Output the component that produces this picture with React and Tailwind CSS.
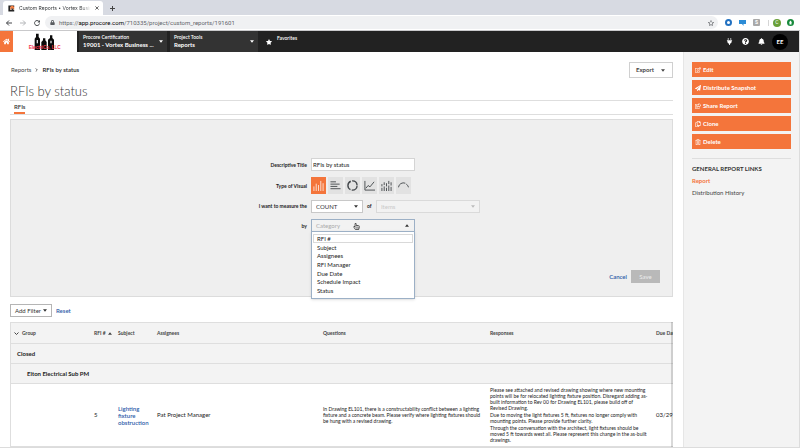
import React from "react";
import {
  FaHome,
  FaStar,
  FaPlug,
  FaQuestionCircle,
  FaBell,
  FaRegEdit,
  FaPaperPlane,
  FaRegShareSquare,
  FaRegCopy,
  FaRegTrashAlt,
  FaRegStar,
  FaLock,
  FaRegHandPointer,
} from "react-icons/fa";

function Caret({ up = false, className = "" }) {
  return (
    <svg viewBox="0 0 8 5" className={`h-[3px] w-1 shrink-0 ${className}`} fill="currentColor" aria-hidden="true">
      <path d={up ? "M0 5L4 0L8 5Z" : "M0 0L4 5L8 0Z"} />
    </svg>
  );
}

function BrowserTabs() {
  return (
    <div className="flex h-[15px] items-end bg-[#d7dae2] pl-[3px]">
      <div className="flex h-[14px] w-[100px] items-center gap-1 rounded-t-[3px] bg-white pr-1 pl-[5px]">
        <svg viewBox="0 0 18 18" className="size-[7px] shrink-0" aria-hidden="true">
          <path d="M1 1H16V5H6V13H16V17H1Z" fill="#222" />
          <path d="M6 4L11 1L16 5V12L11 9L6 12Z" fill="#f47e42" />
          <path d="M9 9H14V14H9Z" fill="#333" />
        </svg>
        <span className="flex-1 overflow-hidden font-[Inter,sans-serif] text-[5px] leading-2 whitespace-nowrap text-[#333639] [mask-image:linear-gradient(to_right,black_85%,transparent)]">
          Custom Reports • Vortex Busin
        </span>
        <button aria-label="Close tab">
          <svg viewBox="0 0 10 10" className="size-1" stroke="#444" strokeWidth="2" aria-hidden="true">
            <path d="M1 1L9 9M9 1L1 9" />
          </svg>
        </button>
      </div>
      <button aria-label="New tab" className="mb-1 ml-[7px]">
        <svg viewBox="0 0 10 10" className="size-[5px]" stroke="#444" strokeWidth="2" aria-hidden="true">
          <path d="M5 0V10M0 5H10" />
        </svg>
      </button>
    </div>
  );
}

function Toolbar() {
  return (
    <div className="flex h-4 items-center border-b border-[#c9c9cb] bg-white pr-[6px] pl-[6px]">
      <div className="flex items-center gap-2">
        <button aria-label="Back">
          <svg viewBox="0 0 12 12" className="size-[6px]" fill="none" stroke="#44474a" strokeWidth="2" aria-hidden="true">
            <path d="M12 6H1M6 1L1 6L6 11" />
          </svg>
        </button>
        <button aria-label="Forward">
          <svg viewBox="0 0 12 12" className="size-[6px]" fill="none" stroke="#b4b6b9" strokeWidth="2" aria-hidden="true">
            <path d="M0 6H11M6 1L11 6L6 11" />
          </svg>
        </button>
        <button aria-label="Reload">
          <svg viewBox="0 0 12 12" className="size-[6px]" fill="none" stroke="#44474a" strokeWidth="2" aria-hidden="true">
            <path d="M10 3A5 5 0 1 0 11 7" />
            <path d="M7 5H12V0Z" fill="#44474a" stroke="none" />
          </svg>
        </button>
      </div>
      <div className="ml-[5px] flex h-[13px] flex-1 items-center rounded-full bg-[#f0f1f3] pr-1 pl-[5px]">
        <FaLock className="size-[5px] text-[#5a5d61]" />
        <span className="ml-1 flex-1 font-[Roboto,sans-serif] text-[6px] leading-2 text-[#62656a]">
          https://<span className="text-black">app.procore.com</span>/710335/project/custom_reports/191601
        </span>
        <FaRegStar className="size-[6px] text-[#55585c]" />
      </div>
      <div className="ml-[7px] flex items-center gap-[7px]">
        <span className="size-[7px] rounded-full border-2 border-[#2271c1]" />
        <svg viewBox="0 0 14 12" className="h-[6px] w-[7px]" fill="#2b8bd6" aria-hidden="true">
          <path d="M0 0H14V8H9V12L6 8H0Z" />
        </svg>
        <span className="grid size-[7px] place-items-center rounded-[1px] bg-[#a9a9a9] font-[Roboto,sans-serif] text-[5px] leading-none font-bold text-white">
          S
        </span>
        <span className="ml-px h-[6px] w-px bg-[#d5d5d5]" />
        <span className="-ml-[3px] grid size-2 place-items-center rounded-full bg-[#689f38] font-[Roboto,sans-serif] text-[5px] leading-none text-white">
          C
        </span>
        <svg viewBox="0 0 14 14" className="-ml-px size-[7px]" aria-hidden="true">
          <circle cx="7" cy="7" r="7" fill="#178a3c" />
          <path d="M7 3L10 7H9V11H5V7H4Z" fill="#fff" />
        </svg>
      </div>
    </div>
  );
}

function CompanyLogo() {
  return (
    <div className="flex w-16 items-center justify-center bg-white">
      <svg viewBox="0 0 102 60" className="h-5 w-[34px]" role="img" aria-label="ElectriCo, LLC">
        <path
          d="M24 5H32V15L36 20V54H20V20L24 15ZM45 19H52V25L56 30V54H40V30L45 25ZM66 10H73V18L78 23V54H60V23L66 18Z"
          fill="#0b0b0b"
        />
        <path d="M26 24H30V34H26ZM67 26H71V34H67Z" fill="#ddd" />
        <text x="2" y="51" fontFamily="Liberation Sans, sans-serif" fontWeight="bold" fontSize="14" fill="#f5374a">
          ElectriCo, LLC
        </text>
      </svg>
    </div>
  );
}

function HeaderMenu({ label, value }) {
  return (
    <button className="flex w-[88px] items-center justify-between bg-[#333] pr-1 pl-1 text-left text-white">
      <span className="flex flex-col">
        <span className="text-[5px] leading-[7px] font-semibold">{label}</span>
        <span className="text-[6px] leading-2 font-bold whitespace-nowrap">{value}</span>
      </span>
      <Caret />
    </button>
  );
}

function AppHeader() {
  return (
    <header className="flex h-[21px] bg-[#222] text-white">
      <button aria-label="Home" className="flex w-[13px] items-center justify-center bg-[#f4753b]">
        <FaHome className="size-[7px]" />
      </button>
      <CompanyLogo />
      <div className="ml-[2px] flex gap-[3px]">
        <HeaderMenu label="Procore Certification" value="19001 - Vortex Business ..." />
        <HeaderMenu label="Project Tools" value="Reports" />
      </div>
      <div className="ml-2 flex flex-1 items-center gap-[5px]">
        <FaStar className="size-[6px]" />
        <span className="mb-[7px] text-[5px] leading-[7px] font-semibold">Favorites</span>
      </div>
      <div className="flex items-center gap-[9px] pr-[11px]">
        <FaPlug className="size-[7px]" />
        <FaQuestionCircle className="size-[7px]" />
        <FaBell className="size-[7px]" />
        <button className="-ml-[2px] size-4 rounded-full bg-black text-[6px] leading-none font-bold">EE</button>
      </div>
    </header>
  );
}

const iconStroke = { fill: "none", stroke: "currentColor", strokeWidth: 2 };
const chartStroke = { fill: "none", stroke: "currentColor", strokeWidth: 3 };

const visuals = [
  {
    name: "Bar chart",
    drawing: <path d="M2 24V14M7 24V8M12 24V11M17 24V2M22 24V7" {...iconStroke} />,
  },
  {
    name: "Horizontal bar chart",
    drawing: <path d="M1 4H13M1 9H21M1 14H16M1 19H23" {...iconStroke} />,
  },
  {
    name: "Donut chart",
    drawing: <circle cx="12" cy="12" r="10" {...chartStroke} strokeDasharray="17 3 22 3 15 3" />,
  },
  {
    name: "Line chart",
    drawing: <path d="M2 2V22H24M4 18L9 12L13 15L22 4" {...iconStroke} />,
  },
  {
    name: "Stacked bar chart",
    drawing: (
      <path d="M2 24V17M2 14V9M7 24V14M7 11V5M12 24V17M12 14V7M17 24V12M17 9V2M22 24V15M22 12V5" {...iconStroke} />
    ),
  },
  {
    name: "Gauge",
    drawing: <path d="M1 16A11 11 0 0 1 16 7M18 9A11 11 0 0 1 23 16" {...iconStroke} />,
  },
];

const categories = ["RFI #", "Subject", "Assignees", "RFI Manager", "Due Date", "Schedule Impact", "Status"];

function FormRow({ id, label, className, children }) {
  return (
    <div className={`flex items-center gap-1 ${className}`}>
      <label htmlFor={id} className="w-[296px] text-right text-[5px] leading-2 font-bold text-[#222]">
        {label}
      </label>
      {children}
    </div>
  );
}

function ReportBuilder() {
  return (
    <form className="mt-1 flex flex-col border border-[#dcdcdc] bg-[#efefef] pt-[38px] pb-[13px]">
      <FormRow id="title" label="Descriptive Title" className="h-[13px]">
        <input
          id="title"
          defaultValue="RFIs by status"
          className="h-[13px] w-[104px] border border-[#d4d4d4] bg-white px-px text-[6px] text-[#222]"
        />
      </FormRow>
      <FormRow label="Type of Visual" className="mt-[6px] h-[17px]">
        <div className="flex gap-[2px]">
          {visuals.map((v, i) => (
            <button
              key={v.name}
              type="button"
              aria-label={v.name}
              className={`grid h-[17px] w-[15px] place-items-center ${
                i === 0 ? "bg-[#f4753b] text-[#fde3d6]" : "bg-[#e2e2e2] text-[#44484c]"
              }`}
            >
              <svg viewBox="0 0 24 24" className="size-[11px]" aria-hidden="true">
                {v.drawing}
              </svg>
            </button>
          ))}
        </div>
      </FormRow>
      <FormRow id="measure" label="I want to measure the" className="mt-[5px] h-[14px]">
        <div className="relative">
          <select
            id="measure"
            className="block h-[13px] w-[52px] appearance-none border border-[#c8c8c8] bg-white pl-1 text-[6px] text-[#333]"
          >
            <option>COUNT</option>
          </select>
          <Caret className="pointer-events-none absolute top-[5px] right-[5px] text-[#333]" />
        </div>
        <label htmlFor="items" className="w-[5px] text-[5px] leading-2 font-bold text-[#222]">
          of
        </label>
        <div className="relative">
          <select
            id="items"
            disabled
            className="block h-[13px] w-[104px] appearance-none border border-[#dadada] bg-[#f2f2f2] pl-1 text-[6px] text-[#c9c9c9] opacity-100"
          >
            <option>Items</option>
          </select>
          <Caret className="pointer-events-none absolute top-[5px] right-[5px] text-[#bbb]" />
        </div>
      </FormRow>
      <FormRow id="category" label="by" className="mt-[6px] h-[13px]">
        <div className="relative z-10">
          <button
            id="category"
            type="button"
            aria-haspopup="listbox"
            aria-expanded="true"
            className="flex h-[13px] w-[104px] items-center justify-between border border-[#9cb0c6] bg-[#f2f2f2] pr-[5px] pl-1 text-[6px] leading-2 text-[#aaa]"
          >
            Category
            <Caret up className="text-[#333]" />
          </button>
          <ul
            role="listbox"
            aria-label="Category"
            className="absolute top-3 left-0 grid h-[68px] w-[104px] grid-rows-7 border border-[#9cb0c6] bg-white px-px pt-[2px] pb-[3px] text-[6px] leading-[7px] text-[#222] shadow-sm"
          >
            {categories.map((c, i) => (
              <li
                key={c}
                role="option"
                aria-selected={i === 0}
                className={`flex items-center border pl-[3px] ${i === 0 ? "border-[#d9d9d9]" : "border-transparent"}`}
              >
                {c}
              </li>
            ))}
          </ul>
          <FaRegHandPointer className="absolute top-1 left-[42px] size-[7px] text-[#333]" />
        </div>
      </FormRow>
      <div className="mt-[38px] flex items-center justify-end gap-1 pr-3">
        <button type="button" className="text-[6px] leading-2 font-semibold text-[#2c5aa8]">
          Cancel
        </button>
        <button type="submit" disabled className="h-[13px] w-[29px] bg-[#b9b9b9] text-[6px] leading-2 text-[#ececec]">
          Save
        </button>
      </div>
    </form>
  );
}

function ReportTable() {
  return (
    <div className="relative mt-[5px] overflow-hidden border-l border-[#dedede]">
      <table className="w-full min-w-[700px] table-fixed border-collapse text-left text-[5px] leading-[6px] text-[#222]">
        <colgroup>
          <col className="w-[80px]" />
          <col className="w-6" />
          <col className="w-[39px]" />
          <col className="w-[166px]" />
          <col className="w-[167px]" />
          <col className="w-[166px]" />
          <col />
        </colgroup>
        <thead>
          <tr className="h-[21px] border-y border-[#dedede] bg-[#f3f3f3] text-[#444] [&>th]:px-[3px] [&>th]:font-bold">
            <th scope="col">
              <span className="flex items-center gap-[3px]">
                <svg viewBox="0 0 10 6" className="h-[3px] w-[5px]" {...iconStroke} aria-hidden="true">
                  <path d="M1 1L5 5L9 1" />
                </svg>
                Group
              </span>
            </th>
            <th scope="col">
              <span className="flex items-center gap-[2px] whitespace-nowrap">
                RFI #
                <Caret up />
              </span>
            </th>
            <th scope="col">Subject</th>
            <th scope="col">Assignees</th>
            <th scope="col">Questions</th>
            <th scope="col">Responses</th>
            <th scope="col" className="whitespace-nowrap">Due Date</th>
          </tr>
        </thead>
        <tbody>
          <tr className="h-5 border-b border-[#dedede] bg-[#f3f3f3] text-[6px]">
            <th colSpan={7} scope="rowgroup" className="pl-[6px] font-bold">
              Closed
            </th>
          </tr>
          <tr className="h-5 border-b border-[#dedede] bg-[#f3f3f3] text-[6px]">
            <th colSpan={7} scope="rowgroup" className="pl-4 font-bold">
              Elton Electrical Sub PM
            </th>
          </tr>
          <tr className="border-b border-[#dedede] [&>td]:px-[3px] [&>td]:py-[3px]">
            <td />
            <td className="text-[6px]">5</td>
            <td className="text-[6px] leading-[7px] font-semibold">
              <a href="#rfi-5" className="text-[#2c5aa8]">
                Lighting fixture obstruction
              </a>
            </td>
            <td className="text-[6px]">Pat Project Manager</td>
            <td className="whitespace-nowrap">
              In Drawing EL101, there is a constructability conflict between a lighting
              <br />
              fixture and a concrete beam. Please verify where lighting fixtures should
              <br />
              be hung with a revised drawing.
            </td>
            <td className="whitespace-nowrap">
              <div className="flex flex-col gap-px">
                <p>
                  Please see attached and revised drawing showing where new mounting
                  <br />
                  points will be for relocated lighting fixture position. Disregard adding as-
                  <br />
                  built information to Rev 00 for Drawing EL101, please build off of
                  <br />
                  Revised Drawing.
                </p>
                <p>
                  Due to moving the light fixtures 5 ft, fixtures no longer comply with
                  <br />
                  mounting points. Please provide further clarity.
                </p>
                <p>
                  Through the conversation with the architect, light fixtures should be
                  <br />
                  moved 5 ft towards west all. Please represent this change in the as-built
                  <br />
                  drawings.
                </p>
              </div>
            </td>
            <td className="text-[6px]">03/29/2019</td>
          </tr>
        </tbody>
      </table>
      <div className="pointer-events-none absolute inset-y-0 right-0 w-[2px] bg-black/15" />
    </div>
  );
}

const actions = [
  { label: "Edit", Icon: FaRegEdit },
  { label: "Distribute Snapshot", Icon: FaPaperPlane },
  { label: "Share Report", Icon: FaRegShareSquare },
  { label: "Clone", Icon: FaRegCopy },
  { label: "Delete", Icon: FaRegTrashAlt },
];

function Sidebar() {
  return (
    <aside className="w-[116px] shrink-0 border-l border-[#e6e6e6] bg-[#f3f3f3] pt-[10px] pr-2 pl-2">
      <div className="flex flex-col gap-[3px]">
        {actions.map(({ label, Icon }) => (
          <button
            key={label}
            className="flex h-[15px] items-center gap-[2px] bg-[#f4753b] pl-[3px] text-[6px] leading-2 font-bold text-white"
          >
            <Icon className="size-[6px]" />
            {label}
          </button>
        ))}
      </div>
      <h2 className="mt-[9px] border-t border-[#dedede] pt-[6px] text-[6px] leading-2 font-bold text-[#333]">
        GENERAL REPORT LINKS
      </h2>
      <nav className="mt-1 flex flex-col items-start gap-1 text-[6px] leading-2">
        <a href="#report" className="font-bold text-[#f4753b]">
          Report
        </a>
        <a href="#history" className="text-[#444]">
          Distribution History
        </a>
      </nav>
    </aside>
  );
}

export default function App() {
  return (
    <div className="flex min-h-screen flex-col bg-white font-[Lato,sans-serif]">
      <BrowserTabs />
      <Toolbar />
      <div className="flex flex-1 flex-col border-r border-b border-[#dcdcdc]">
        <AppHeader />
        <div className="flex flex-1">
          <main className="min-w-0 flex-1 pt-[10px] pr-[10px] pl-[10px]">
            <div className="flex items-center justify-between">
              <nav aria-label="Breadcrumb" className="flex items-center gap-1 pl-px text-[6px] leading-2 text-[#444]">
                <a href="#reports">Reports</a>
                <svg viewBox="0 0 6 10" className="h-1 w-[3px]" {...iconStroke} aria-hidden="true">
                  <path d="M1 1L5 5L1 9" />
                </svg>
                <span className="font-semibold text-[#222]">RFIs by status</span>
              </nav>
              <button className="flex h-4 w-[44px] items-center justify-between border border-[#d0d0d0] bg-white pr-[7px] pl-[6px] text-[6px] leading-2 font-bold text-[#444]">
                Export
                <Caret />
              </button>
            </div>
            <h1 className="mt-1 text-[13px] leading-[18px] font-light text-[#333]">RFIs by status</h1>
            <div className="flex h-[15px] items-end border-y border-[#dedede] pl-1">
              <button className="flex h-3 items-start border-b-2 border-[#f4753b] pt-px text-[6px] leading-2 font-semibold text-[#333]">
                RFIs
              </button>
            </div>
            <ReportBuilder />
            <div className="mt-[7px] flex items-center gap-1">
              <button className="flex h-[13px] w-[42px] items-center justify-between border border-[#b5b5b5] bg-white pr-1 pl-1 text-[6px] leading-2 text-[#333]">
                Add Filter
                <Caret />
              </button>
              <button className="text-[6px] leading-2 font-semibold text-[#2c5aa8]">Reset</button>
            </div>
            <ReportTable />
          </main>
          <Sidebar />
        </div>
      </div>
    </div>
  );
}
